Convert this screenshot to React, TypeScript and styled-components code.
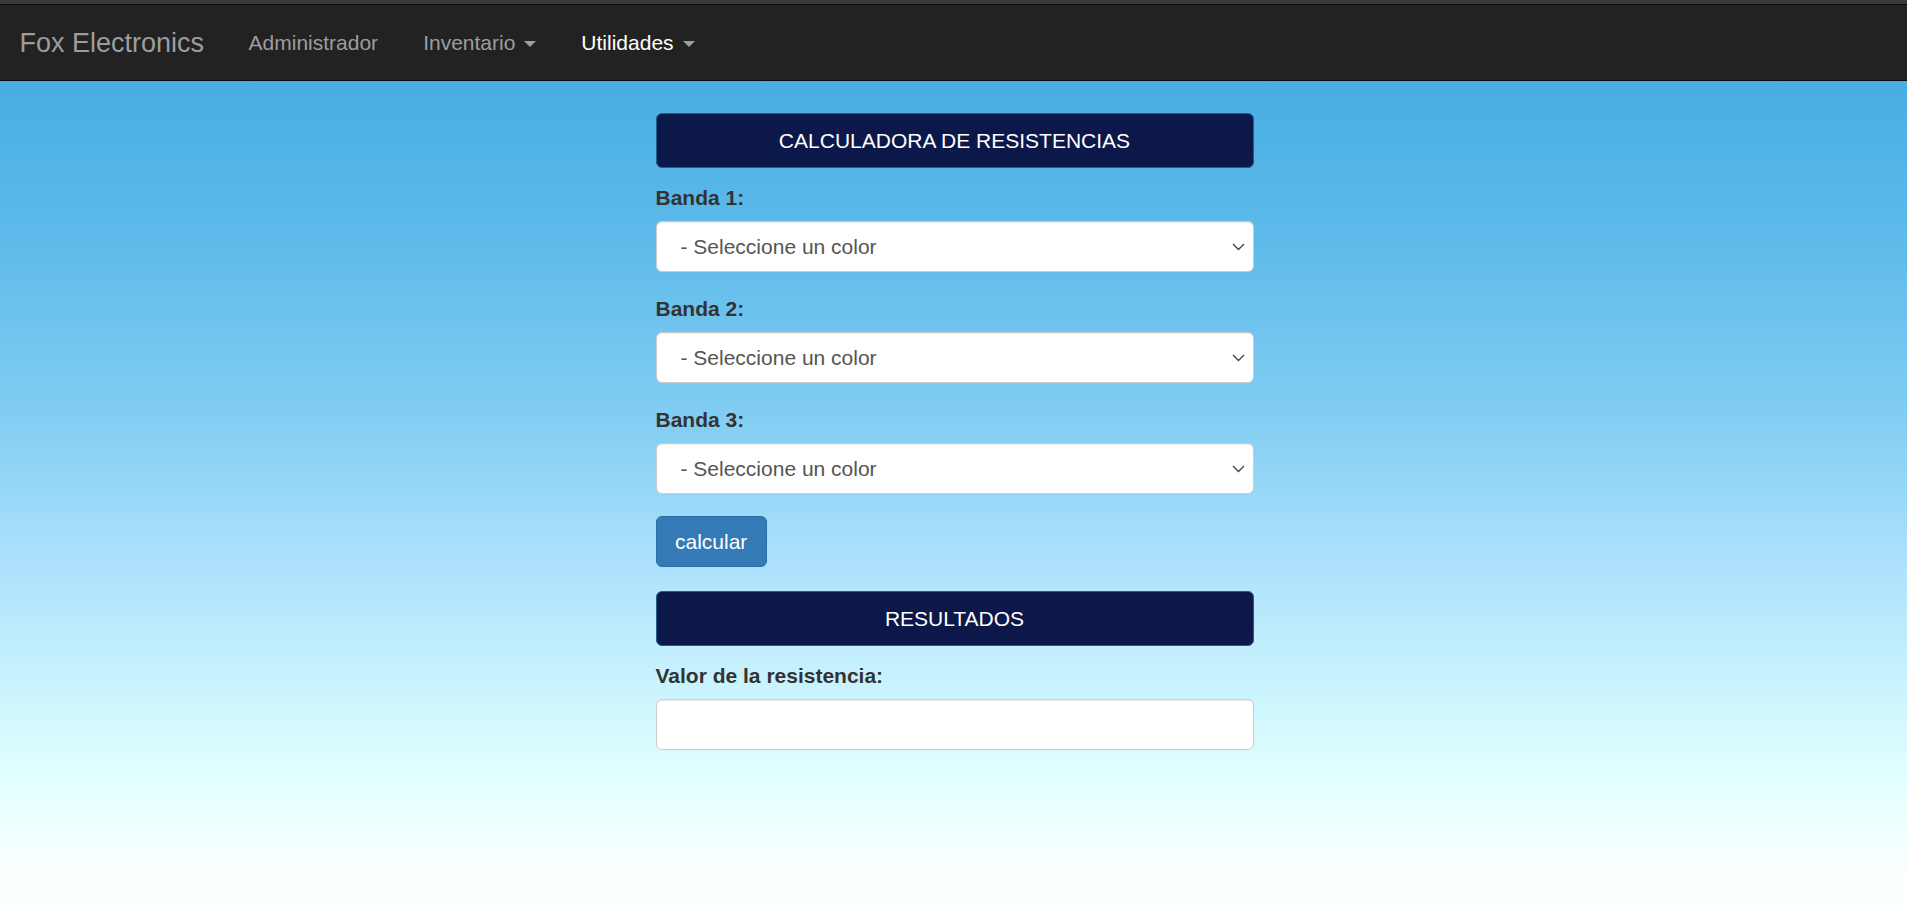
import React from "react";
import styled, { createGlobalStyle } from "styled-components";

const GlobalStyle = createGlobalStyle`
  html, body {
    margin: 0;
    padding: 0;
  }
  body {
    font-family: "Liberation Sans", Arial, Helvetica, sans-serif;
    font-size: 21px;
    line-height: 1.42857;
    color: #333;
    background: #fff;
  }
  * { box-sizing: border-box; }
`;

const Page = styled.div`
  min-height: 100vh;
  display: flex;
  flex-direction: column;
`;

const TopStrip = styled.div`
  height: 4px;
  background: #3a3a3c;
`;

const Navbar = styled.nav`
  display: flex;
  align-items: center;
  height: 77px;
  background: #222;
  border-top: 1px solid #080808;
  border-bottom: 1px solid #080808;
  padding: 0 0 0 19.5px;
`;

const Brand = styled.a`
  font-size: 27px;
  line-height: 30px;
  color: #9d9d9d;
  text-decoration: none;
  padding-right: 22px;
`;

const NavList = styled.ul`
  display: flex;
  list-style: none;
  margin: 0;
  padding: 0;
`;

const NavLink = styled.a<{ $active?: boolean }>`
  display: flex;
  align-items: center;
  padding: 0 22.5px;
  font-size: 21px;
  line-height: 30px;
  color: ${(p) => (p.$active ? "#fff" : "#9d9d9d")};
  text-decoration: none;
`;

const Caret = styled.span`
  display: inline-block;
  width: 0;
  height: 0;
  margin-left: 9px;
  margin-top: 2px;
  border-top: 6px solid #9d9d9d;
  border-left: 6px solid transparent;
  border-right: 6px solid transparent;
`;

const Main = styled.main`
  flex: 1;
  background: linear-gradient(
    to bottom,
    #47ade3 0%,
    #5fbbea 20%,
    #85cff3 42%,
    #ade1fc 58%,
    #ccf5fd 74%,
    #e2ffff 84%,
    #f6ffff 92%,
    #ffffff 100%
  );
  padding-top: 32px;
`;

const Column = styled.div`
  width: 598px;
  margin-left: calc(50% - 298px);
  display: flex;
  flex-direction: column;
`;

const SectionHeader = styled.div<{ $gapTop?: number }>`
  height: 55px;
  display: flex;
  align-items: center;
  justify-content: center;
  background: #0b1849;
  border: 1px solid #1f5e8e;
  border-radius: 6px;
  color: #fff;
  font-size: 21px;
  margin-top: ${(p) => p.$gapTop ?? 0}px;
  margin-bottom: 15px;
`;

const FormGroup = styled.div`
  display: flex;
  flex-direction: column;
  margin-bottom: 22.5px;
`;

const Label = styled.label`
  display: block;
  font-weight: bold;
  font-size: 21px;
  line-height: 30px;
  color: #333;
  margin-bottom: 7.5px;
`;

const SelectWrap = styled.div`
  position: relative;
`;

const Select = styled.select`
  appearance: none;
  -webkit-appearance: none;
  width: 100%;
  height: 51px;
  padding: 0 40px 0 24px;
  font-family: inherit;
  font-size: 21px;
  color: #555;
  background: #fff;
  border: 1px solid #ccc;
  border-radius: 6px;
  box-shadow: inset 0 1px 1px rgba(0, 0, 0, 0.075);
  outline: none;
`;

const Chevron = styled.svg`
  position: absolute;
  right: 9px;
  top: 50%;
  width: 13px;
  height: 8px;
  margin-top: -3px;
  pointer-events: none;
`;

const Input = styled.input`
  width: 100%;
  height: 51px;
  padding: 0 18px;
  font-family: inherit;
  font-size: 21px;
  color: #555;
  background: #fff;
  border: 1px solid #ccc;
  border-radius: 6px;
  box-shadow: inset 0 1px 1px rgba(0, 0, 0, 0.075);
  outline: none;
`;

const Button = styled.button`
  align-self: flex-start;
  height: 51px;
  padding: 0 18.5px;
  font-family: inherit;
  font-size: 21px;
  color: #fff;
  background: #337ab7;
  border: 1px solid #2e6da4;
  border-radius: 6px;
  cursor: pointer;
`;

const bands = ["Banda 1:", "Banda 2:", "Banda 3:"];

function ColorSelect({ id }: { id: string }) {
  return (
    <SelectWrap>
      <Select id={id} defaultValue="">
        <option value="">- Seleccione un color</option>
        <option value="0">Negro</option>
        <option value="1">Marrón</option>
        <option value="2">Rojo</option>
        <option value="3">Naranja</option>
        <option value="4">Amarillo</option>
        <option value="5">Verde</option>
        <option value="6">Azul</option>
        <option value="7">Violeta</option>
        <option value="8">Gris</option>
        <option value="9">Blanco</option>
      </Select>
      <Chevron viewBox="0 0 13 8">
        <path d="M1 1 L6.5 6.5 L12 1" fill="none" stroke="#444" strokeWidth="1.4" />
      </Chevron>
    </SelectWrap>
  );
}

export default function App() {
  return (
    <>
      <GlobalStyle />
      <Page>
        <TopStrip />
        <Navbar>
          <Brand href="#">Fox Electronics</Brand>
          <NavList>
            <li>
              <NavLink href="#">Administrador</NavLink>
            </li>
            <li>
              <NavLink href="#">
                Inventario <Caret />
              </NavLink>
            </li>
            <li>
              <NavLink href="#" $active>
                Utilidades <Caret />
              </NavLink>
            </li>
          </NavList>
        </Navbar>
        <Main>
          <Column>
            <SectionHeader>CALCULADORA DE RESISTENCIAS</SectionHeader>
            {bands.map((b, i) => (
              <FormGroup key={b}>
                <Label htmlFor={`banda${i + 1}`}>{b}</Label>
                <ColorSelect id={`banda${i + 1}`} />
              </FormGroup>
            ))}
            <Button type="button">calcular</Button>
            <SectionHeader $gapTop={24}>RESULTADOS</SectionHeader>
            <FormGroup>
              <Label htmlFor="valor">Valor de la resistencia:</Label>
              <Input id="valor" type="text" />
            </FormGroup>
          </Column>
        </Main>
      </Page>
    </>
  );
}
